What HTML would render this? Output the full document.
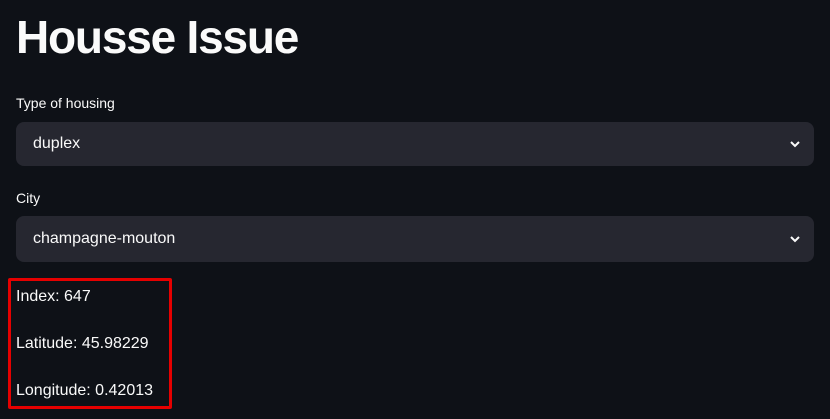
<!DOCTYPE html>
<html><head><style>
body{margin:0;background:#0e1117;width:830px;height:419px;overflow:hidden;font-family:"Liberation Sans",sans-serif;color:#fafafa;position:relative}
.a{position:absolute}
h1{position:absolute;left:16px;top:10px;margin:0;font-size:46px;font-weight:bold;letter-spacing:-1.2px}
.lbl{font-size:14px;left:16px}
.sel{left:16px;width:798px;background:#262730;border-radius:8px}
.sel span{position:absolute;left:17px;font-size:16px}
.chev{position:absolute;right:12px}
.t{font-size:16px;left:16px}
.box{left:8px;top:278px;width:158px;height:125px;border:3px solid #e50000;border-radius:2px}
</style></head><body>
<h1>Housse Issue</h1>
<div class="a lbl" style="top:95px">Type of housing</div>
<div class="a sel" style="top:122px;height:44px"><span style="top:13px">duplex</span>
<svg class="chev" style="top:15px" width="14" height="14" viewBox="0 0 14 14"><path d="M3 5l4 4 4-4" stroke="#fafafa" stroke-width="2" fill="none"/></svg></div>
<div class="a lbl" style="top:190px">City</div>
<div class="a sel" style="top:216px;height:46px"><span style="top:14px">champagne-mouton</span>
<svg class="chev" style="top:16px" width="14" height="14" viewBox="0 0 14 14"><path d="M3 5l4 4 4-4" stroke="#fafafa" stroke-width="2" fill="none"/></svg></div>
<div class="a box"></div>
<div class="a t" style="top:288px">Index: 647</div>
<div class="a t" style="top:335px">Latitude: 45.98229</div>
<div class="a t" style="top:382px">Longitude: 0.42013</div>
</body></html>
